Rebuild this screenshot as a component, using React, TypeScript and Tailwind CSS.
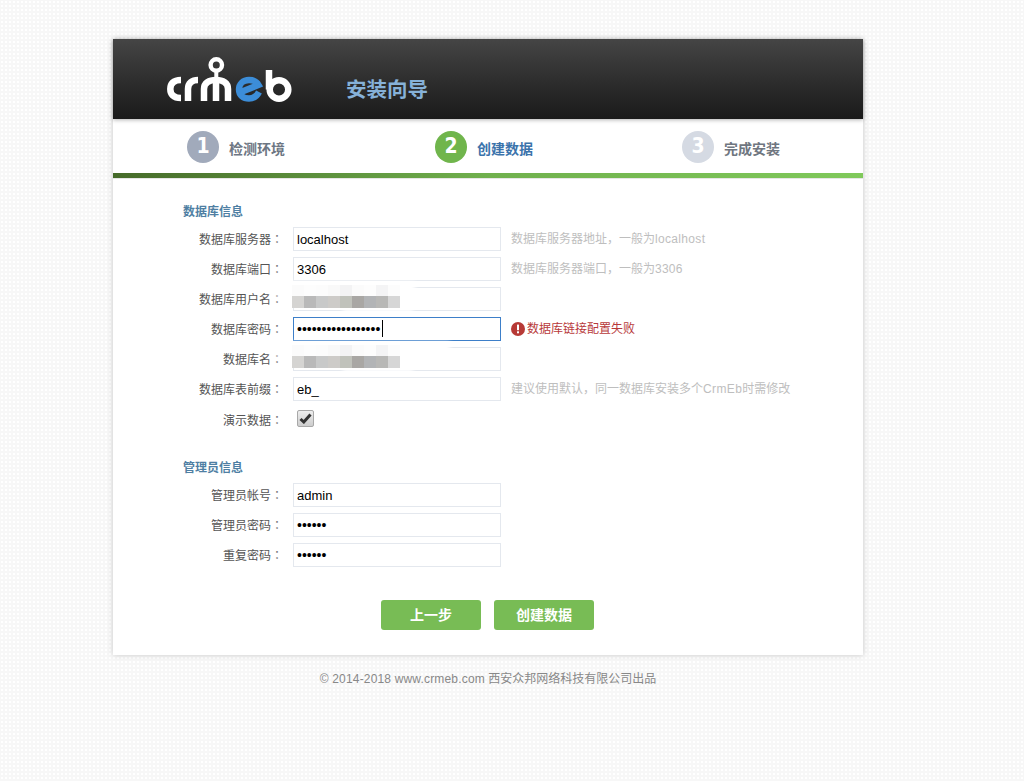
import React from "react";

const FONT = "font-['Liberation_Sans','Noto_Sans_CJK_SC',sans-serif]";

function Logo() {
  return (
    <svg width="130" height="60" viewBox="0 0 130 60" fill="none" className="block">
      {/* c */}
      <path d="M17 32 C9 32 6.3 36 6.3 41 C6.3 46 9 50 17 50" stroke="#fff" strokeWidth="6.5" />
      {/* r */}
      <path d="M24 53 V41 C24 35 28 32 34 32" stroke="#fff" strokeWidth="6.5" />
      {/* m */}
      <path d="M40 53 V41 C40 35 45 32 52 32 C59 32 64 35 64 41 V53 M52 32 V53" stroke="#fff" strokeWidth="6.5" />
      <path d="M52.3 32 V23" stroke="#fff" strokeWidth="4" />
      <circle cx="52.3" cy="17" r="5.7" stroke="#fff" strokeWidth="4.4" />
      {/* e */}
      <path d="M77 44 L94.5 37 C92.5 33.5 89 32 85 32 C79 32 75 36 75 41.5 C75 47 79 50.5 85 50.5 C89.5 50.5 93 48 95 44" stroke="#3c8dd8" strokeWidth="6.4" />
      {/* b */}
      <path d="M105 22 V41.5" stroke="#fff" strokeWidth="6.5" />
      <circle cx="115" cy="41.5" r="9.3" stroke="#fff" strokeWidth="6.5" />
    </svg>
  );
}

function Step({ n, text, circle, color, width }: { n: string; text: string; circle: string; color: string; width: string }) {
  return (
    <div className={`flex items-center ${width}`}>
      <div className={`w-8 h-8 rounded-full flex items-center justify-center text-white font-bold text-[21px] font-['DejaVu_Sans_Condensed','DejaVu_Sans',sans-serif] ${circle}`}>{n}</div>
      <span className={`ml-2.5 mt-[4px] text-sm font-bold ${color}`}>{text}</span>
    </div>
  );
}

function Mosaic({ smear }: { smear: string }) {
  const top = ["#fbfbfb", "#fdfdfd", "#fcfcfc", "#f9f9f9", "#f3f3f4", "#fbfbfb", "#fdfdfd", "#f4f4f5", "#fcfcfc"];
  const bottom = ["#d5d4d2", "#b9b9b9", "#c8c9c9", "#cdcbc8", "#c0c2bb", "#a9a7a4", "#b2b4b6", "#b8b8b6", "#d6d6d6"];
  return (
    <>
      <div className={`absolute left-[-18px] top-[-5px] h-[14px] bg-white blur-[2px] pointer-events-none ${smear}`} />
      <div className="absolute left-[50px] top-[21px] w-[70px] h-[5px] bg-white blur-[2px] pointer-events-none" />
      <div className="absolute left-[-1px] top-[-2px] pointer-events-none">
        <div className="flex h-[11px]">
          {top.map((c, i) => (
            <div key={i} className="w-3 h-full" style={{ background: c }} />
          ))}
        </div>
        <div className="flex h-3">
          {bottom.map((c, i) => (
            <div key={i} className="w-3 h-full" style={{ background: c }} />
          ))}
        </div>
      </div>
    </>
  );
}

function Row({
  label,
  value,
  type = "text",
  hint,
  focus,
  smear,
  labelClass = "",
  children,
}: {
  label: string;
  value?: string;
  type?: string;
  hint?: React.ReactNode;
  focus?: boolean;
  smear?: string;
  labelClass?: string;
  children?: React.ReactNode;
}) {
  const dots = type === "password" || focus;
  return (
    <div className="flex items-center h-6 mb-[6px]">
      <label className={`w-[100px] mr-[10px] text-right text-xs text-[#555] whitespace-nowrap shrink-0 ${labelClass}`}>
        {label}
        <span className="font-['Noto_Sans_CJK_TC',sans-serif] text-[#777]">：</span>
      </label>
      {children ?? (
        <div className="relative w-[208px] h-6 shrink-0">
          <input
            readOnly
            type={type}
            defaultValue={value}
            className={`block w-full h-full border px-[3px] text-black outline-none bg-white ${dots ? "text-[14px]" : "text-[13px]"} ${FONT} ${focus ? "border-[#3d7fc9]" : "border-[#e4e8ee]"}`}
          />
          {focus && <div className="absolute left-[89px] top-[3px] w-px h-[17px] bg-black" />}
          {smear && <Mosaic smear={smear} />}
        </div>
      )}
      {hint && <span className="ml-2.5 text-xs text-[#bebebe] whitespace-nowrap">{hint}</span>}
      {focus && (
        <span className="ml-2.5 flex items-center text-xs text-[#b8393a] whitespace-nowrap">
          <svg width="14" height="14" viewBox="0 0 14 14" className="mr-[2px] shrink-0">
            <circle cx="7" cy="7" r="7" fill="#b73a36" />
            <rect x="6" y="2.6" width="2" height="5.6" fill="#fff" />
            <rect x="6" y="9.3" width="2" height="2" fill="#fff" />
          </svg>
          数据库链接配置失败
        </span>
      )}
    </div>
  );
}

export default function App() {
  return (
    <div className={`min-h-[781px] pt-[39px] bg-[#f7f7f7] bg-[radial-gradient(#ffffff_1px,transparent_1px)] bg-[size:4px_4px] ${FONT}`}>
      <div className="ml-[113px] w-[750px] h-[616px] bg-white shadow-[0_0_6px_rgba(0,0,0,0.18)]">
        <header className="h-20 flex items-start bg-gradient-to-b from-[#454545] to-[#1a1a1a] shadow-[0_1px_4px_rgba(0,0,0,0.3)] pl-[51px] pt-[9px]">
          <Logo />
          <h1 className="ml-[52px] mt-[28px] text-[20.5px] font-bold text-[#86b1d8] leading-[28px] whitespace-nowrap">安装向导</h1>
        </header>
        <div className="h-[54px] flex items-center pl-[74px] pt-[2px]">
          <Step n="1" text="检测环境" circle="bg-[#a1aabb]" color="text-[#6d7683]" width="w-[248px]" />
          <Step n="2" text="创建数据" circle="bg-[#70b54c]" color="text-[#3b73ab]" width="w-[247px]" />
          <Step n="3" text="完成安装" circle="bg-[#d5dae3]" color="text-[#6f7680]" width="w-[150px]" />
        </div>
        <div className="h-[5px] bg-gradient-to-r from-[#466b2a] via-[#70b04d] via-50% to-[#80c95b]" />
        <div className="h-px bg-[#e6e6e6]" />
        <div className="pl-[70px] pt-[25px]">
          <h2 className="h-4 mb-[7px] text-xs font-bold leading-4 text-[#4f7fa3]">数据库信息</h2>
          <Row label="数据库服务器" value="localhost" hint={<>数据库服务器地址，一般为<span className="tracking-[0.33px]">localhost</span></>} />
          <Row label="数据库端口" value="3306" hint={<>数据库服务器端口，一般为<span className="tracking-[0.25px]">3306</span></>} />
          <Row label="数据库用户名" value="" smear="w-[140px]" />
          <Row label="数据库密码" value="•••••••••••••••••" focus />
          <Row label="数据库名" value="" smear="w-[175px]" />
          <Row label="数据库表前缀" value="eb_" hint={<>建议使用默认，同一数据库安装多个<span className="tracking-[0.4px]">CrmEb</span>时需修改</>} />
          <Row label="演示数据" labelClass="pt-[2px]">
            <div className="w-[17px] h-[17px] ml-[4px] -mt-px flex items-center justify-center rounded-[2px] border border-[#a8a8a8] bg-gradient-to-b from-[#eeeeee] to-[#cdcdcd]">
              <svg width="13" height="11" viewBox="0 0 13 11" fill="none">
                <path d="M1.5 6 L4.8 9 L11.5 1.5" stroke="#333" strokeWidth="3" />
              </svg>
            </div>
          </Row>
          <h2 className="h-4 mt-[29px] mb-[7px] text-xs font-bold leading-4 text-[#4f7fa3]">管理员信息</h2>
          <Row label="管理员帐号" value="admin" />
          <Row label="管理员密码" value="123456" type="password" />
          <Row label="重复密码" value="123456" type="password" />
          <div className="flex ml-[198px] mt-[33px] gap-[13px]">
            <button className="w-[100px] h-[30px] rounded-[3px] bg-[#78bc55] text-white text-sm font-bold">上一步</button>
            <button className="w-[100px] h-[30px] rounded-[3px] bg-[#78bc55] text-white text-sm font-bold">创建数据</button>
          </div>
        </div>
      </div>
      <p className="ml-[113px] w-[750px] mt-[16px] text-center text-xs leading-4 text-[#888]"><span className="tracking-[0.17px]">© 2014-2018 www.crmeb.com</span> 西安众邦网络科技有限公司出品</p>
    </div>
  );
}
